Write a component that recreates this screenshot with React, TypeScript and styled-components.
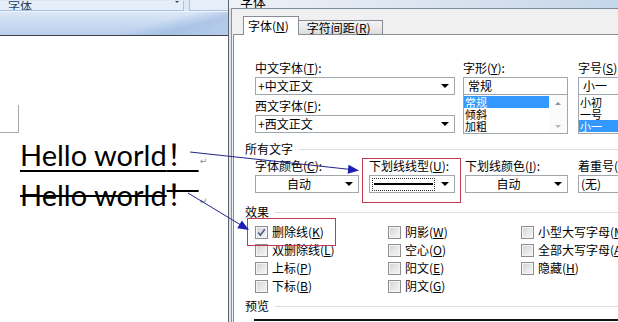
import React from "react";
import styled, { createGlobalStyle } from "styled-components";

const GlobalStyle = createGlobalStyle`
  html, body { margin: 0; padding: 0; width: 618px; height: 322px; overflow: hidden; background: #fff; }
  #root { width: 618px; height: 322px; }
`;

const CJK = `"Noto Sans CJK SC", "Noto Sans", sans-serif`;

const Screen = styled.div`
  position: relative;
  display: flex;
  width: 618px;
  height: 322px;
  overflow: hidden;
  font-family: ${CJK};
  font-size: 12px;
  color: #000;
`;

/* ---------- Word document side ---------- */
const DocPane = styled.div`
  width: 228px;
  flex: none;
  display: flex;
  flex-direction: column;
  background: #fff;
`;

const RibbonTop = styled.div`
  height: 11px;
  display: flex;
  align-items: flex-end;
  background: #dce8f6;
  border-bottom: 1px solid #eef4fb;
  overflow: hidden;
`;

const FontNameBox = styled.div`
  width: 184px;
  height: 10px;
  display: flex;
  align-items: flex-end;
  justify-content: space-between;
  padding: 0 4px 0 8px;
  box-sizing: border-box;
  background: #e6eef9;
  border-bottom: 1px solid #a9c1e0;
  border-right: 1px solid #a9c1e0;
  overflow: hidden;
`;

const FontNameText = styled.span`
  font-size: 12px;
  line-height: 14px;
  margin-bottom: -3px;
  color: #27415f;
`;

const TinyArrow = styled.span`
  width: 0;
  height: 0;
  border-left: 2px solid transparent;
  border-right: 2px solid transparent;
  border-top: 2px solid #33475f;
  margin-bottom: 7px;
`;

const FontSizeBox = styled.div`
  margin-left: 5px;
  flex: 1;
  height: 10px;
  background: #e6eef9;
  border-left: 1px solid #a9c1e0;
  border-bottom: 1px solid #a9c1e0;
`;

const RibbonBand = styled.div`
  height: 23px;
  background:
    linear-gradient(165deg, transparent 62%, rgba(150, 178, 220, 0.55) 78%, rgba(178, 200, 232, 0.4) 100%),
    linear-gradient(180deg, #dbe7f6 0%, #c7daf1 55%, #b9cfec 100%);
  border-bottom: 1px solid #3a3f48;
`;

const Page = styled.div`
  flex: 1;
  display: flex;
  flex-direction: column;
`;

const MarginCorner = styled.div`
  margin-top: 69px;
  width: 18px;
  height: 27px;
  border-right: 1px solid #a8a8a8;
  border-bottom: 1px solid #a8a8a8;
`;

const HelloLine = styled.div`
  margin-left: 20px;
  height: 40px;
  line-height: 40px;
  white-space: nowrap;
  font-family: Lato, "Noto Sans", sans-serif;
  font-size: 29px;
  &:first-of-type { margin-top: 1px; }
`;

const HelloText = styled.span<{ $strike?: boolean }>`
  text-decoration: ${(p) => (p.$strike ? "line-through" : "underline")};
  text-decoration-thickness: 2px;
  text-underline-offset: 4px;
  text-decoration-skip-ink: none;
`;

const Bang = styled.span`
  font-family: "Noto Sans CJK SC", sans-serif;
  font-size: 29px;
  letter-spacing: 3px;
`;

const ParaMark = styled.span`
  font-family: "DejaVu Sans", sans-serif;
  font-size: 9px;
  color: #8090b0;
  vertical-align: 2px;
  margin-left: 1px;
`;

/* ---------- Dialog ---------- */
const Dialog = styled.div`
  flex: 1;
  min-width: 0;
  display: flex;
  flex-direction: column;
  border-left: 1px solid #5f6368;
  overflow: hidden;
`;

const TitleBar = styled.div`
  height: 8px;
  flex: none;
  display: flex;
  align-items: flex-end;
  padding-left: 11px;
  background: linear-gradient(90deg, #eef2f7 0%, #dfe7f1 40%, #c6d6ea 100%);
  overflow: hidden;
`;

const TitleText = styled.span`
  font-size: 13px;
  line-height: 14px;
  margin-bottom: -1px;
`;

const Frame = styled.div`
  flex: 1;
  display: flex;
  padding-left: 2px;
  background: #dde6f0;
`;

const Client = styled.div`
  flex: 1;
  display: flex;
  flex-direction: column;
  border-top: 1px solid #7d8a9c;
  border-left: 1px solid #8a8f96;
  background: #f0f0f0;
  padding-top: 7px;
`;

const TabStrip = styled.div`
  display: flex;
  align-items: flex-end;
  padding-left: 11px;
  height: 19px;
  position: relative;
  z-index: 1;
  margin-bottom: -1px;
`;

const Tab = styled.div<{ $active?: boolean }>`
  height: ${(p) => (p.$active ? "19px" : "15px")};
  box-sizing: border-box;
  display: flex;
  align-items: center;
  padding: 0 ${(p) => (p.$active ? "9px" : "11px")} 0 ${(p) => (p.$active ? "4px" : "8px")};
  border: 1px solid #898c95;
  border-bottom: ${(p) => (p.$active ? "none" : "1px solid #898c95")};
  border-left: ${(p) => (p.$active ? "1px solid #898c95" : "none")};
  background: ${(p) => (p.$active ? "#fff" : "linear-gradient(180deg, #f3f3f3 0%, #ebebeb 50%, #dcdcdc 100%)")};
  white-space: nowrap;
  line-height: 14px;
`;

const Panel = styled.div`
  flex: 1;
  margin-left: 1px;
  border-top: 1px solid #898c95;
  border-left: 1px solid #898c95;
  background: #fff;
  padding: 26px 0 0 11px;
  display: flex;
  flex-direction: column;
`;

const Mn = styled.span`
  text-decoration: underline;
  text-underline-offset: 1px;
`;

const Key = ({ k }: { k: string }) => (
  <>
    (<Mn>{k}</Mn>)
  </>
);

const Label = styled.div<{ $top?: number }>`
  height: 14px;
  line-height: 14px;
  margin-top: ${(p) => p.$top ?? 0}px;
  margin-bottom: 2px;
  white-space: nowrap;
`;

const FontRow = styled.div`
  display: flex;
  gap: 8px;
  padding-left: 10px;
`;

const FieldCol = styled.div<{ $w: number; $gapAfter?: number }>`
  width: ${(p) => p.$w}px;
  flex: none;
  display: flex;
  flex-direction: column;
  margin-right: ${(p) => p.$gapAfter ?? 0}px;
`;

const BoxBase = styled.div`
  height: 18px;
  box-sizing: border-box;
  border: 1px solid #a2a6ad;
  background: #fff;
  display: flex;
  align-items: center;
  line-height: 14px;
  white-space: nowrap;
`;

const ComboBox = styled(BoxBase)`
  padding-left: 2px;
`;

const ComboValue = styled.span<{ $center?: boolean }>`
  flex: 1;
  text-align: ${(p) => (p.$center ? "center" : "left")};
`;

const ComboArrow = styled.span`
  width: 18px;
  flex: none;
  display: flex;
  justify-content: center;
  &::after {
    content: "";
    width: 0;
    height: 0;
    border-left: 4px solid transparent;
    border-right: 4px solid transparent;
    border-top: 4px solid #000;
  }
`;

const LineSample = styled.span`
  flex: 1;
  height: 13px;
  margin-right: 1px;
  box-sizing: border-box;
  border: 1px dotted #303030;
  display: flex;
  align-items: center;
  padding: 0 1px;
  &::after {
    content: "";
    flex: 1;
    height: 2px;
    background: #000;
  }
`;

const Combo = ({ value, center, sample }: { value?: string; center?: boolean; sample?: boolean }) => (
  <ComboBox>
    {sample ? <LineSample /> : <ComboValue $center={center}>{value}</ComboValue>}
    <ComboArrow />
  </ComboBox>
);

const TextBox = styled(BoxBase)`
  padding-left: 4px;
`;

const ListFrame = styled.div`
  height: 39px;
  box-sizing: border-box;
  border: 1px solid #a2a6ad;
  border-top: none;
  display: flex;
  background: #fff;
`;

const ListItems = styled.div`
  flex: 1;
  display: flex;
  flex-direction: column;
  padding-top: 1px;
`;

const ListItem = styled.div<{ $sel?: boolean }>`
  height: 12px;
  line-height: 12px;
  font-size: 11px;
  padding-left: 1px;
  background: ${(p) => (p.$sel ? "#3399ff" : "transparent")};
  color: ${(p) => (p.$sel ? "#fff" : "#000")};
  white-space: nowrap;
`;

const ScrollBar = styled.div`
  width: 18px;
  flex: none;
  display: flex;
  flex-direction: column;
  justify-content: space-between;
  align-items: center;
  padding: 7px 0 5px;
  box-sizing: border-box;
  background: #fbfbfb;
`;

const ScrollArrow = styled.span<{ $down?: boolean }>`
  width: 0;
  height: 0;
  border-left: 3px solid transparent;
  border-right: 3px solid transparent;
  ${(p) => (p.$down ? "border-top: 3px solid #b8b8b8;" : "border-bottom: 3px solid #909090;")}
`;

const ListBox = ({ items, selected, scroll }: { items: string[]; selected: number; scroll?: boolean }) => (
  <ListFrame>
    <ListItems>
      {items.map((it, i) => (
        <ListItem key={it} $sel={i === selected}>
          {it}
        </ListItem>
      ))}
    </ListItems>
    {scroll && (
      <ScrollBar>
        <ScrollArrow />
        <ScrollArrow $down />
      </ScrollBar>
    )}
  </ListFrame>
);

const GroupHeader = styled.div<{ $top: number }>`
  margin-top: ${(p) => p.$top}px;
  height: 14px;
  line-height: 14px;
  display: flex;
  align-items: center;
  gap: 6px;
  white-space: nowrap;
  &::after {
    content: "";
    flex: 1;
    height: 1px;
    background: #dadee3;
    margin-top: 1px;
  }
`;

const FieldRow = styled.div`
  display: flex;
  gap: 10px;
  padding-left: 10px;
  margin-top: 3px;
`;

const CheckGrid = styled.div`
  margin-top: 4px;
  padding-left: 10px;
  display: grid;
  grid-template-columns: repeat(3, 133px);
  grid-template-rows: repeat(4, 18px);
  grid-auto-flow: column;
`;

const CheckItem = styled.div`
  display: flex;
  align-items: center;
  gap: 4px;
  white-space: nowrap;
  line-height: 14px;
`;

const CheckBox = styled.span`
  width: 13px;
  height: 13px;
  box-sizing: border-box;
  flex: none;
  border: 1px solid #8f8f8f;
  background: linear-gradient(135deg, #d2d2d2 0%, #e8e8e8 55%, #f7f7f7 100%);
  box-shadow: inset 0 0 0 1px #f4f4f4;
  display: flex;
  align-items: center;
  justify-content: center;
`;

const Check = ({ label, k, checked }: { label: string; k: string; checked?: boolean }) => (
  <CheckItem>
    <CheckBox>
      {checked && (
        <svg width="9" height="9" viewBox="0 0 9 9">
          <path d="M1.2 4.6 L3.4 7.2 L7.8 1.2" fill="none" stroke="#4b5e8c" strokeWidth="1.6" />
        </svg>
      )}
    </CheckBox>
    <span>
      {label}
      <Key k={k} />
    </span>
  </CheckItem>
);

const PreviewBox = styled.div`
  margin-top: 6px;
  margin-left: 9px;
  height: 10px;
  border-top: 2px solid #111;
`;

const Overlay = styled.svg`
  position: absolute;
  left: 0;
  top: 0;
  pointer-events: none;
`;

export default function App() {
  return (
    <>
      <GlobalStyle />
      <Screen>
        <DocPane>
          <RibbonTop>
            <FontNameBox>
              <FontNameText>字体</FontNameText>
              <TinyArrow />
            </FontNameBox>
            <FontSizeBox />
          </RibbonTop>
          <RibbonBand />
          <Page>
            <MarginCorner />
            <HelloLine>
              <HelloText>
                Hello world<Bang>！</Bang>
              </HelloText>
              <ParaMark>↵</ParaMark>
            </HelloLine>
            <HelloLine>
              <HelloText $strike>
                Hello world<Bang>！</Bang>
              </HelloText>
              <ParaMark>↵</ParaMark>
            </HelloLine>
          </Page>
        </DocPane>

        <Dialog>
          <TitleBar>
            <TitleText>字体</TitleText>
          </TitleBar>
          <Frame>
            <Client>
              <TabStrip>
                <Tab $active>
                  字体<Key k="N" />
                </Tab>
                <Tab>
                  字符间距<Key k="R" />
                </Tab>
              </TabStrip>
              <Panel>
                <FontRow>
                  <FieldCol $w={200}>
                    <Label>
                      中文字体<Key k="T" />:
                    </Label>
                    <Combo value="+中文正文" />
                    <Label $top={4}>
                      西文字体<Key k="F" />:
                    </Label>
                    <Combo value="+西文正文" />
                  </FieldCol>
                  <FieldCol $w={105} $gapAfter={2}>
                    <Label>
                      字形<Key k="Y" />:
                    </Label>
                    <TextBox>常规</TextBox>
                    <ListBox items={["常规", "倾斜", "加粗"]} selected={0} scroll />
                  </FieldCol>
                  <FieldCol $w={80}>
                    <Label>
                      字号<Key k="S" />:
                    </Label>
                    <TextBox>小一</TextBox>
                    <ListBox items={["小初", "一号", "小一"]} selected={2} />
                  </FieldCol>
                </FontRow>

                <GroupHeader $top={8}>所有文字</GroupHeader>
                <FieldRow>
                  <FieldCol $w={104}>
                    <Label>
                      字体颜色<Key k="C" />:
                    </Label>
                    <Combo value="自动" center />
                  </FieldCol>
                  <FieldCol $w={86}>
                    <Label>
                      下划线线型<Key k="U" />:
                    </Label>
                    <Combo sample />
                  </FieldCol>
                  <FieldCol $w={103}>
                    <Label>
                      下划线颜色<Key k="I" />:
                    </Label>
                    <Combo value="自动" center />
                  </FieldCol>
                  <FieldCol $w={80}>
                    <Label>着重号(·):</Label>
                    <Combo value="(无)" />
                  </FieldCol>
                </FieldRow>

                <GroupHeader $top={12}>效果</GroupHeader>
                <CheckGrid>
                  <Check label="删除线" k="K" checked />
                  <Check label="双删除线" k="L" />
                  <Check label="上标" k="P" />
                  <Check label="下标" k="B" />
                  <Check label="阴影" k="W" />
                  <Check label="空心" k="O" />
                  <Check label="阳文" k="E" />
                  <Check label="阴文" k="G" />
                  <Check label="小型大写字母" k="M" />
                  <Check label="全部大写字母" k="A" />
                  <Check label="隐藏" k="H" />
                </CheckGrid>

                <GroupHeader $top={4}>预览</GroupHeader>
                <PreviewBox />
              </Panel>
            </Client>
          </Frame>
        </Dialog>

        <Overlay width="618" height="322" viewBox="0 0 618 322">
          <rect x="362.5" y="158.5" width="98" height="44" fill="none" stroke="#c23a4f" strokeWidth="1" />
          <rect x="247.5" y="218.5" width="88" height="27" fill="none" stroke="#c23a4f" strokeWidth="1" />
          <line x1="190" y1="152" x2="349" y2="169.3" stroke="#23238a" strokeWidth="1" />
          <polygon points="359,170.5 347.7,173.8 348.5,164.8" fill="#1c1cb8" />
          <line x1="188" y1="193" x2="240" y2="224.5" stroke="#23238a" strokeWidth="1" />
          <polygon points="249,230 237.2,228.2 241.9,220.6" fill="#1c1cb8" />
        </Overlay>
      </Screen>
    </>
  );
}
